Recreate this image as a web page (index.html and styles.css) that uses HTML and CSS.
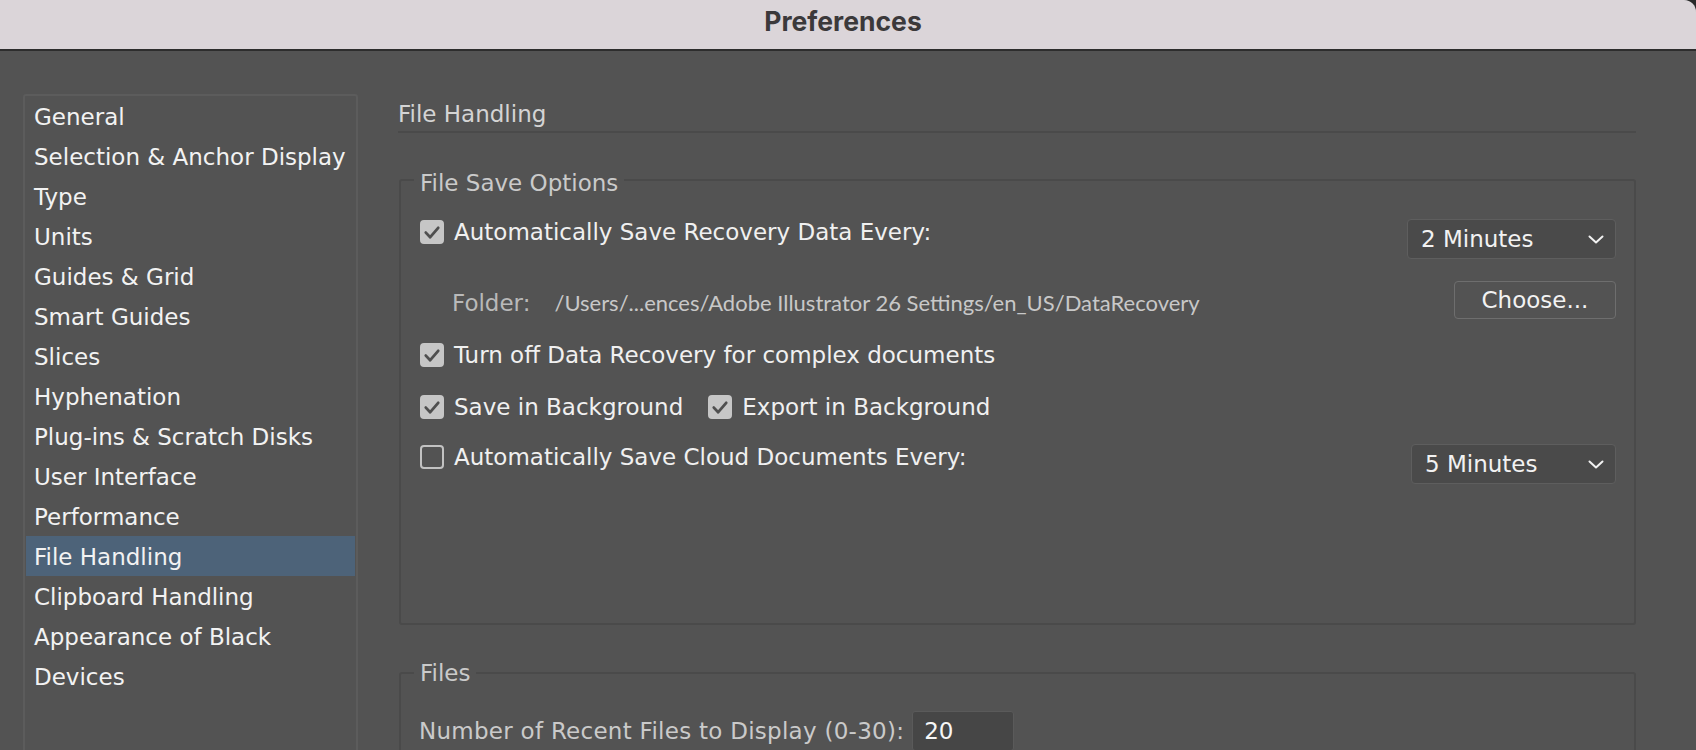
FILE: index.html
```html
<!DOCTYPE html>
<html lang="en">
<head>
<meta charset="utf-8">
<title>Preferences</title>
<link rel="stylesheet" href="styles.css">
</head>
<body>
<div class="window">
  <header class="titlebar"><span class="title">Preferences</span></header>
  <div class="content">
    <nav class="sidebar">
      <ul class="nav-list">
        <li class="nav-item">General</li>
        <li class="nav-item">Selection &amp; Anchor Display</li>
        <li class="nav-item">Type</li>
        <li class="nav-item">Units</li>
        <li class="nav-item">Guides &amp; Grid</li>
        <li class="nav-item">Smart Guides</li>
        <li class="nav-item">Slices</li>
        <li class="nav-item">Hyphenation</li>
        <li class="nav-item">Plug-ins &amp; Scratch Disks</li>
        <li class="nav-item">User Interface</li>
        <li class="nav-item">Performance</li>
        <li class="nav-item is-active">File Handling</li>
        <li class="nav-item">Clipboard Handling</li>
        <li class="nav-item">Appearance of Black</li>
        <li class="nav-item">Devices</li>
      </ul>
    </nav>
    <main class="panel">
      <h1 class="panel-title">File Handling</h1>

      <fieldset class="group group-save">
        <legend class="group-legend">File Save Options</legend>
        <div class="rows">
          <div class="row">
            <label class="check">
              <span class="box is-checked"><svg class="tick" viewBox="0 0 24 24"><path d="M5.8 12.6l4.4 4.6 8-9.4"/></svg></span>
              <span class="check-label">Automatically Save Recovery Data Every:</span>
            </label>
            <div class="select select-recovery"><span>2 Minutes</span><svg class="chevron" viewBox="0 0 16 9"><path d="M1.5 1.5l6.5 6 6.5-6"/></svg></div>
          </div>
          <div class="row">
            <span class="folder-label">Folder:</span>
            <span class="folder-path">/Users/...ences/Adobe Illustrator 26 Settings/en_US/DataRecovery</span>
            <button class="btn">Choose...</button>
          </div>
          <div class="row">
            <label class="check">
              <span class="box is-checked"><svg class="tick" viewBox="0 0 24 24"><path d="M5.8 12.6l4.4 4.6 8-9.4"/></svg></span>
              <span class="check-label">Turn off Data Recovery for complex documents</span>
            </label>
          </div>
          <div class="row row-pair">
            <label class="check">
              <span class="box is-checked"><svg class="tick" viewBox="0 0 24 24"><path d="M5.8 12.6l4.4 4.6 8-9.4"/></svg></span>
              <span class="check-label">Save in Background</span>
            </label>
            <label class="check">
              <span class="box is-checked"><svg class="tick" viewBox="0 0 24 24"><path d="M5.8 12.6l4.4 4.6 8-9.4"/></svg></span>
              <span class="check-label">Export in Background</span>
            </label>
          </div>
          <div class="row">
            <label class="check">
              <span class="box"></span>
              <span class="check-label">Automatically Save Cloud Documents Every:</span>
            </label>
            <div class="select select-cloud"><span>5 Minutes</span><svg class="chevron" viewBox="0 0 16 9"><path d="M1.5 1.5l6.5 6 6.5-6"/></svg></div>
          </div>
        </div>
      </fieldset>

      <fieldset class="group group-files">
        <legend class="group-legend">Files</legend>
        <div class="row row-files">
          <span class="files-label">Number of Recent Files to Display (0-30):</span>
          <div class="num-input">20</div>
        </div>
      </fieldset>
    </main>
  </div>
</div>
</body>
</html>
```

FILE: styles.css
```css
html, body {
  margin: 0;
  padding: 0;
  height: 100%;
}

body {
  background: #2a2a2a;
  overflow: hidden;
  font-family: "DejaVu Sans", Verdana, sans-serif;
  font-size: 23px;
  color: #f0f0f0;
}

.window {
  height: 750px;
  background: #535353;
  border-top-right-radius: 12px;
  overflow: hidden;
}

.titlebar {
  height: 49px;
  border-bottom: 2px solid #2d2d2d;
  background: #dbd5d9;
  display: flex;
  justify-content: center;
  align-items: flex-start;
}

.title {
  font-family: Inter, "DejaVu Sans", sans-serif;
  font-weight: 700;
  font-size: 26.5px;
  line-height: 42px;
  color: #3b393b;
  padding-right: 10px;
}

.content {
  display: flex;
  align-items: flex-start;
  padding-left: 23px;
}

/* Sidebar */
.sidebar {
  width: 335px;
  height: 700px;
  margin-top: 43px;
  box-sizing: border-box;
  border: 2px solid #5c5c5c;
  border-radius: 3px;
  padding: 0 1px;
}

.nav-list {
  list-style: none;
  margin: 0;
  padding: 0;
}

.nav-item {
  height: 40px;
  line-height: 43px;
  padding-left: 8px;
  color: #f2f2f2;
  white-space: nowrap;
}

.nav-item.is-active {
  background: #4d6379;
}

/* Main panel */
.panel {
  width: 1238px;
  margin-left: 40px;
  padding-top: 49px;
}

.panel-title {
  margin: 0;
  font-size: 23px;
  font-weight: normal;
  line-height: 28px;
  color: #d4d4d4;
  padding-bottom: 3px;
  border-bottom: 2px solid #4a4a4a;
}

.group {
  margin: 30px 0 0 1px;
  padding: 21px 18px 139px 19px;
  border: 2px solid #4a4a4a;
  border-radius: 3px;
  min-inline-size: 0;
}

.group-legend {
  padding: 6px 6px 0;
  margin-left: -6px;
  line-height: 28px;
  color: #cacaca;
}

.group-files {
  margin-top: 34px;
  padding-top: 24px;
  padding-bottom: 40px;
}

.group-files .group-legend {
  padding-top: 0;
}

.rows {
  display: flex;
  flex-direction: column;
  gap: 22px;
}

.row {
  display: flex;
  align-items: flex-start;
}

.check {
  display: flex;
  align-items: center;
  height: 28px;
  gap: 10px;
  white-space: nowrap;
}

.check-label {
  line-height: 28px;
  color: #f0f0f0;
}

.row-pair {
  gap: 25px;
  margin-top: 2px;
}

.box {
  width: 24px;
  height: 24px;
  box-sizing: border-box;
  border-radius: 4px;
  border: 2px solid #c2c2c2;
  display: flex;
}

.box.is-checked {
  background: #c6c6c6;
  border-color: #c6c6c6;
}

.tick {
  width: 24px;
  height: 24px;
  margin: -2px;
}

.tick path {
  fill: none;
  stroke: #4f4f4f;
  stroke-width: 2.8;
  stroke-linecap: round;
  stroke-linejoin: round;
}

.select {
  margin-left: auto;
  margin-top: 1px;
  height: 40px;
  box-sizing: border-box;
  border: 1px solid #5e5e5e;
  border-radius: 4px;
  background: #4a4a4a;
  display: flex;
  align-items: center;
  justify-content: space-between;
  padding: 0 11px 0 13px;
  line-height: 38px;
  color: #f2f2f2;
}

.select-recovery {
  width: 209px;
}

.select-cloud {
  width: 205px;
}

.chevron {
  width: 16px;
  height: 9px;
}

.chevron path {
  fill: none;
  stroke: #f2f2f2;
  stroke-width: 2;
  stroke-linecap: round;
  stroke-linejoin: round;
}

.folder-label {
  margin-left: 32px;
  margin-top: 8px;
  line-height: 28px;
  color: #b9b9b9;
}

.folder-path {
  margin-left: 24px;
  margin-top: 8px;
  line-height: 28px;
  font-family: Lato, "Liberation Sans", sans-serif;
  font-size: 22px;
  color: #c8c8c8;
  white-space: nowrap;
}

.btn {
  margin-left: auto;
  width: 162px;
  height: 38px;
  box-sizing: border-box;
  border: 1px solid #6e6e6e;
  border-radius: 4px;
  background: #535353;
  color: #f2f2f2;
  font-family: inherit;
  font-size: 23px;
  padding: 0;
  line-height: 36px;
}

.row-files {
  align-items: center;
  gap: 8px;
}

.files-label {
  line-height: 28px;
  color: #cacaca;
  margin-left: -1px;
  letter-spacing: 0.27px;
  white-space: nowrap;
}

.num-input {
  width: 102px;
  height: 40px;
  box-sizing: border-box;
  border: 1px solid #5a5a5a;
  border-radius: 3px;
  background: #464646;
  padding-left: 11px;
  line-height: 38px;
  color: #f6f6f6;
}
```
